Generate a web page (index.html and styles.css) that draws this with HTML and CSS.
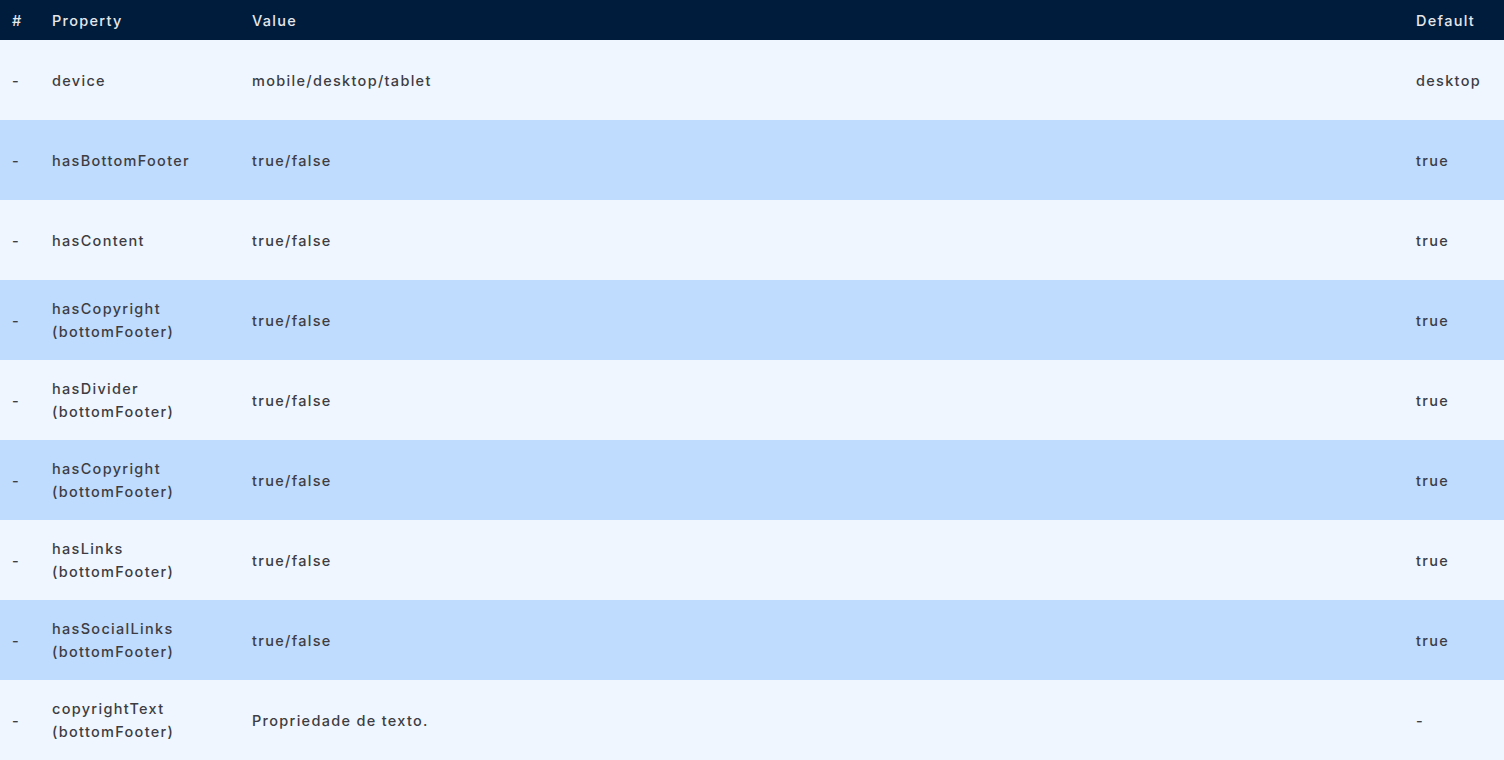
FILE: index.html
```html
<!DOCTYPE html>
<html lang="pt">
<head>
<meta charset="utf-8">
<title>Props</title>
<link rel="stylesheet" href="styles.css">
</head>
<body>
<div class="table">
  <div class="row head">
    <div class="c-num">#</div>
    <div class="c-prop">Property</div>
    <div class="c-val">Value</div>
    <div class="c-def">Default</div>
  </div>
  <div class="row light">
    <div class="c-num">-</div>
    <div class="c-prop">device</div>
    <div class="c-val">mobile/desktop/tablet</div>
    <div class="c-def">desktop</div>
  </div>
  <div class="row dark">
    <div class="c-num">-</div>
    <div class="c-prop">hasBottomFooter</div>
    <div class="c-val">true/false</div>
    <div class="c-def">true</div>
  </div>
  <div class="row light">
    <div class="c-num">-</div>
    <div class="c-prop">hasContent</div>
    <div class="c-val">true/false</div>
    <div class="c-def">true</div>
  </div>
  <div class="row dark">
    <div class="c-num">-</div>
    <div class="c-prop">hasCopyright (bottomFooter)</div>
    <div class="c-val">true/false</div>
    <div class="c-def">true</div>
  </div>
  <div class="row light">
    <div class="c-num">-</div>
    <div class="c-prop">hasDivider (bottomFooter)</div>
    <div class="c-val">true/false</div>
    <div class="c-def">true</div>
  </div>
  <div class="row dark">
    <div class="c-num">-</div>
    <div class="c-prop">hasCopyright (bottomFooter)</div>
    <div class="c-val">true/false</div>
    <div class="c-def">true</div>
  </div>
  <div class="row light">
    <div class="c-num">-</div>
    <div class="c-prop">hasLinks (bottomFooter)</div>
    <div class="c-val">true/false</div>
    <div class="c-def">true</div>
  </div>
  <div class="row dark">
    <div class="c-num">-</div>
    <div class="c-prop">hasSocialLinks (bottomFooter)</div>
    <div class="c-val">true/false</div>
    <div class="c-def">true</div>
  </div>
  <div class="row light">
    <div class="c-num">-</div>
    <div class="c-prop">copyrightText (bottomFooter)</div>
    <div class="c-val">Propriedade de texto.</div>
    <div class="c-def">-</div>
  </div>
</div>
</body>
</html>
```
FILE: styles.css
```css
html, body {
  margin: 0;
  padding: 0;
  background: #eff6ff;
}
.table {
  display: flex;
  flex-direction: column;
  font-family: Inter, "Open Sans", sans-serif;
  font-size: 14.5px;
  font-weight: 500;
  letter-spacing: 1.3px;
  line-height: 23px;
  color: #3d3d42;
}
.row {
  display: grid;
  grid-template-columns: 52px 200px 1fr 88px;
  align-items: center;
  height: 80px;
}
.row.head {
  height: 40px;
  background: #001c3d;
  color: #e5e7eb;
}
.row.light { background: #eff6ff; }
.row.dark { background: #bfdbfe; }
.c-num { padding-left: 12px; }
.c-prop { padding-right: 20px; }
.c-def { padding-right: 12px; }
```
